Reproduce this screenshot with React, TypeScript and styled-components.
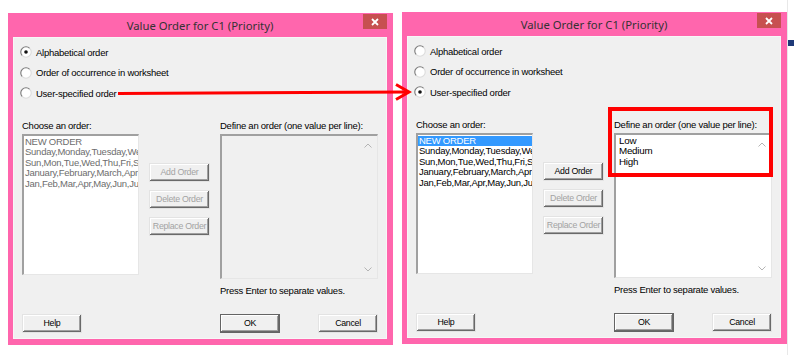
import React from "react";
import styled, { createGlobalStyle } from "styled-components";

const GlobalStyle = createGlobalStyle`
  html, body {
    margin: 0;
    padding: 0;
    background: #fff;
  }
  body {
    font-family: "Liberation Sans", Arial, sans-serif;
    overflow: hidden;
  }
`;

const Page = styled.div`
  position: relative;
  width: 794px;
  height: 355px;
  box-sizing: border-box;
  padding-left: 8px;
  display: flex;
  align-items: flex-start;
`;

const Frame = styled.div<{ $top: number; $gap?: number }>`
  margin-top: ${({ $top }) => $top}px;
  margin-left: ${({ $gap }) => $gap || 0}px;
  width: 385px;
  height: 332px;
  box-sizing: border-box;
  padding: 0 6px 6px 5px;
  background: #ff66ad;
  display: flex;
  flex-direction: column;
`;

const TitleBar = styled.div`
  height: 24px;
  flex: none;
  display: grid;
  grid-template-columns: 24px 1fr 24px;
`;

const Title = styled.div`
  grid-column: 2;
  align-self: center;
  text-align: center;
  font-family: "Noto Sans", "Open Sans", sans-serif;
  font-size: 11.3px;
  color: #333;
`;

const CloseBtn = styled.div`
  grid-column: 3;
  margin-top: 1px;
  height: 15px;
  background: #c75050;
  display: flex;
  align-items: center;
  justify-content: center;
`;

const Content = styled.div`
  flex: 1;
  background: #f0f0f0;
  border: 1px solid #f7f7f7;
  padding: 4px 8px 0 8px;
  font-size: 9.5px;
  letter-spacing: -0.25px;
  color: #000;
`;

const RadioGroup = styled.div`
  margin-left: -2px;
  display: flex;
  flex-direction: column;
`;

const RadioRow = styled.div`
  height: 20.5px;
  display: flex;
  align-items: center;
  gap: 4px;
`;

const Body = styled.div`
  margin-top: 16px;
  display: grid;
  grid-template-columns: 117px 61px 158px;
  grid-template-rows: 12px 145px auto auto;
  column-gap: 10px;
  row-gap: 2px;
`;

const Label = styled.div<{ $col: number }>`
  grid-column: ${({ $col }) => $col};
  grid-row: 1;
  line-height: 12px;
  white-space: nowrap;
`;

const ListBox = styled.div<{ $disabled?: boolean }>`
  grid-column: 1;
  grid-row: 2;
  height: 141px;
  box-sizing: border-box;
  background: #fff;
  border-style: solid;
  border-width: 2px 1px 1px 2px;
  border-color: #a0a0a0 #e6e6e6 #e6e6e6 #a0a0a0;
  padding-top: 1px;
  overflow: hidden;
  color: ${({ $disabled }) => ($disabled ? "#6d6d6d" : "#000")};
`;

const ListItem = styled.div<{ $selected?: boolean }>`
  line-height: 10.5px;
  padding-left: 1px;
  white-space: nowrap;
  overflow: hidden;
  background: ${({ $selected }) => ($selected ? "#3399ff" : "transparent")};
  color: ${({ $selected }) => ($selected ? "#fff" : "inherit")};
`;

const ButtonCol = styled.div`
  grid-column: 2;
  grid-row: 2;
  padding-top: 29px;
  display: flex;
  flex-direction: column;
  gap: 8px;
`;

const Button = styled.div<{ $disabled?: boolean; $default?: boolean; $width?: number }>`
  width: ${({ $width }) => ($width ? `${$width}px` : "auto")};
  height: 19px;
  box-sizing: border-box;
  display: flex;
  align-items: center;
  justify-content: center;
  white-space: nowrap;
  font-size: 8.8px;
  letter-spacing: -0.3px;
  background: #f0f0f0;
  color: ${({ $disabled }) => ($disabled ? "#a3a3a3" : "#000")};
  border: 1px solid ${({ $default }) => ($default ? "#646464" : "#e3e3e3")};
  box-shadow: inset -1px -1px #696969, inset 1px 1px #fff, inset -2px -2px #a0a0a0;
`;

const TextBox = styled.div<{ $disabled?: boolean }>`
  grid-column: 3;
  grid-row: 2;
  box-sizing: border-box;
  background: ${({ $disabled }) => ($disabled ? "#f0f0f0" : "#fff")};
  border-style: solid;
  border-width: 2px 1px 1px 2px;
  border-color: #a0a0a0 #e6e6e6 #e6e6e6 #a0a0a0;
  display: flex;
`;

const Lines = styled.div`
  flex: 1;
  padding: 1px 0 0 3px;
  font-size: 9.8px;
  line-height: 10.5px;
`;

const ScrollCol = styled.div`
  width: 18px;
  padding: 7px 0 6px;
  display: flex;
  flex-direction: column;
  justify-content: space-between;
  align-items: center;
`;

const Note = styled.div`
  grid-column: 3;
  grid-row: 3;
  margin-top: 4px;
  line-height: 12px;
  white-space: nowrap;
`;

const Footer = styled.div`
  grid-column: 1 / 4;
  grid-row: 4;
  margin-top: 15px;
  display: grid;
  grid-template-columns: 117px 61px 158px;
  column-gap: 10px;
`;

const FooterRight = styled.div`
  grid-column: 3;
  display: flex;
  justify-content: space-between;
`;

const Strip = styled.div`
  width: 7px;
  height: 355px;
  border-left: 1px solid #e8e8e8;
  box-sizing: border-box;
`;

const StripBar = styled.div`
  margin-top: 40px;
  height: 6px;
  background: #1e3a78;
`;

const Overlay = styled.svg`
  position: absolute;
  left: 0;
  top: 0;
  pointer-events: none;
`;

const Highlight = styled.div`
  position: absolute;
  left: 608px;
  top: 107px;
  width: 165px;
  height: 70px;
  box-sizing: border-box;
  border: 4px solid #ff0000;
  pointer-events: none;
`;

const Radio = ({ checked }: { checked?: boolean }) => (
  <svg width="12" height="12" viewBox="0 0 12 12">
    <circle cx="6" cy="6" r="5.2" fill="#fff" />
    <path d="M2.3 9.7 A5.2 5.2 0 0 1 9.7 2.3" stroke="#7a7a7a" strokeWidth="1.1" fill="none" />
    <path d="M9.7 2.3 A5.2 5.2 0 0 1 2.3 9.7" stroke="#dcdcdc" strokeWidth="1.1" fill="none" />
    {checked && <circle cx="6" cy="6" r="1.8" fill="#111" />}
  </svg>
);

const Chevron = ({ up }: { up?: boolean }) => (
  <svg width="8" height="5" viewBox="0 0 8 5">
    <path
      d={up ? "M0.5 4.5 L4 1 L7.5 4.5" : "M0.5 0.5 L4 4 L7.5 0.5"}
      stroke="#b4b4b4"
      strokeWidth="1"
      fill="none"
    />
  </svg>
);

const orders = [
  "NEW ORDER",
  "Sunday,Monday,Tuesday,Wednesday,Thursday,Friday,Saturday",
  "Sun,Mon,Tue,Wed,Thu,Fri,Sat",
  "January,February,March,April,May,June,July,August",
  "Jan,Feb,Mar,Apr,May,Jun,Jul,Aug,Sep,Oct,Nov,Dec",
];

const radios = ["Alphabetical order", "Order of occurrence in worksheet", "User-specified order"];

interface DialogProps {
  top: number;
  gap?: number;
  userOrder?: boolean;
  values?: string[];
}

const Dialog = ({ top, gap, userOrder, values = [] }: DialogProps) => (
  <Frame $top={top} $gap={gap}>
    <TitleBar>
      <Title>Value Order for C1 (Priority)</Title>
      <CloseBtn>
        <svg width="8" height="8" viewBox="0 0 8 8">
          <path d="M1 1 L7 7 M7 1 L1 7" stroke="#fff" strokeWidth="1.8" />
        </svg>
      </CloseBtn>
    </TitleBar>
    <Content>
      <RadioGroup>
        {radios.map((r, i) => (
          <RadioRow key={r}>
            <Radio checked={userOrder ? i === 2 : i === 0} />
            {r}
          </RadioRow>
        ))}
      </RadioGroup>
      <Body>
        <Label $col={1}>Choose an order:</Label>
        <Label $col={3}>Define an order (one value per line):</Label>
        <ListBox $disabled={!userOrder}>
          {orders.map((o, i) => (
            <ListItem key={o} $selected={userOrder && i === 0}>
              {o}
            </ListItem>
          ))}
        </ListBox>
        <ButtonCol>
          <Button $disabled={!userOrder}>Add Order</Button>
          <Button $disabled>Delete Order</Button>
          <Button $disabled>Replace Order</Button>
        </ButtonCol>
        <TextBox $disabled={!userOrder}>
          <Lines>
            {values.map(v => (
              <div key={v}>{v}</div>
            ))}
          </Lines>
          <ScrollCol>
            <Chevron up />
            <Chevron />
          </ScrollCol>
        </TextBox>
        <Note>Press Enter to separate values.</Note>
        <Footer>
          <Button $width={60}>Help</Button>
          <FooterRight>
            <Button $width={60} $default>
              OK
            </Button>
            <Button $width={60}>Cancel</Button>
          </FooterRight>
        </Footer>
      </Body>
    </Content>
  </Frame>
);

const App = () => {
  return (
    <Page>
      <GlobalStyle />
      <Dialog top={13} />
      <Dialog top={12} gap={9} userOrder values={["Low", "Medium", "High"]} />
      <Strip>
        <StripBar />
      </Strip>
      <Overlay width="794" height="355">
        <path d="M118 93.5 L407 92" stroke="#ff0000" strokeWidth="3" />
        <path d="M396 84.5 L409 92 L396 99.5" stroke="#ff0000" strokeWidth="3" fill="none" />
      </Overlay>
      <Highlight />
    </Page>
  );
};

export default App;
